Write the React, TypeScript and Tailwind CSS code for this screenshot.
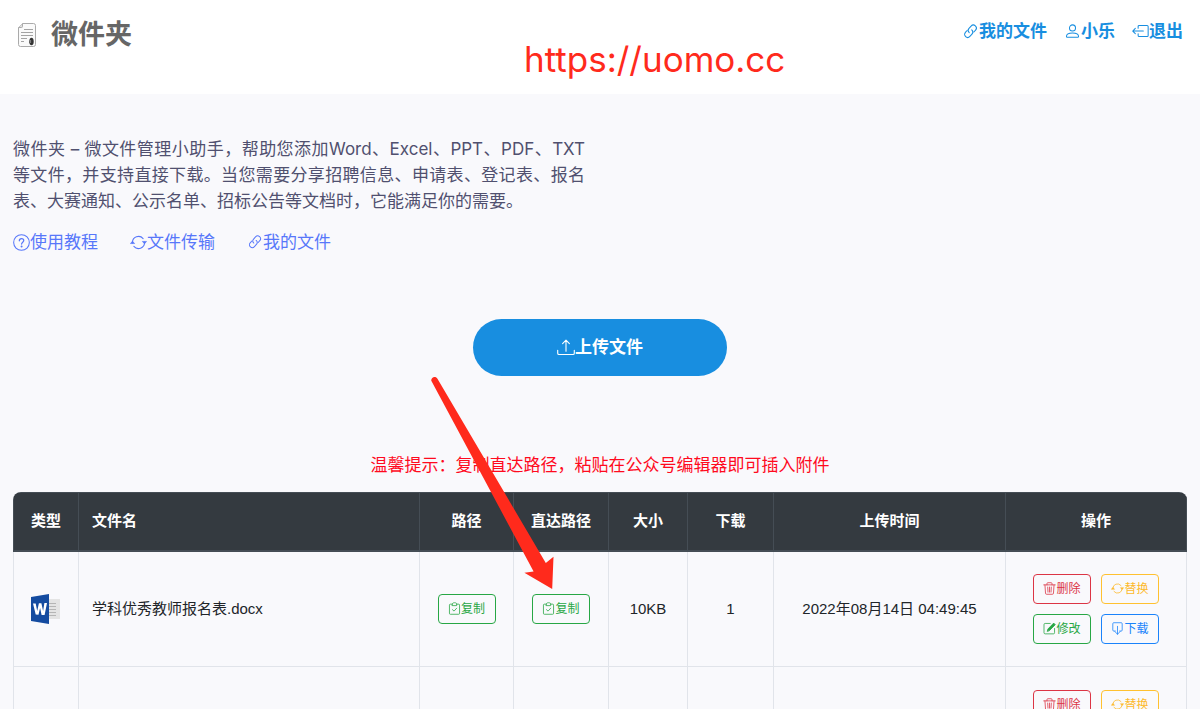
import React from "react";

type IconProps = { className?: string };

function Icon({ className = "", children, size = "size-[17px]" }: IconProps & { children: React.ReactNode; size?: string }) {
  return (
    <svg viewBox="0 0 18 18" className={`${size} shrink-0 ${className}`} fill="none" stroke="currentColor" strokeWidth="1.1" strokeLinecap="round" strokeLinejoin="round" aria-hidden="true">
      {children}
    </svg>
  );
}

const LinkIcon = ({ size }: { size?: string }) => (
  <Icon size={size}>
    <g transform="rotate(-48 9 9)">
      <path d="M7.400 5.600H4.700a3.200 3.200 0 0 0 0 6.400h3.300a3.200 3.200 0 0 0 3.200-3.200" />
      <path d="M11 12h2.700a3.200 3.200 0 0 0 0-6.400h-3.300A3.200 3.200 0 0 0 7.200 8.800" />
    </g>
  </Icon>
);
const UserIcon = () => (
  <Icon>
    <circle cx="9" cy="5.200" r="3.200" />
    <path d="M2.600 14.200c0-2.200 2.600-3.600 6.400-3.600s6.400 1.400 6.400 3.600c0 .6-.3.900-.9.900h-11c-.6 0-.9-.3-.9-.9z" />
  </Icon>
);
const ExitIcon = () => (
  <Icon>
    <path d="M6.500 5.500V3.700c0-.7.4-1.100 1.100-1.100H16c.7 0 1.100.4 1.100 1.100v9.600c0 .7-.4 1.100-1.100 1.100H7.600c-.7 0-1.100-.4-1.100-1.100V11.500M12 8.500H.8M3.500 5.700.8 8.500l2.700 2.800" />
  </Icon>
);
const HelpIcon = () => (
  <Icon>
    <circle cx="9" cy="9" r="8.300" />
    <path d="M6.700 7.200c0-1.500 1-2.400 2.400-2.400 1.300 0 2.300.9 2.300 2.100 0 1.700-2.300 1.900-2.300 3.800" strokeWidth="1.300" />
    <circle cx="9.100" cy="13.200" r=".5" fill="currentColor" />
  </Icon>
);
const SwapIcon = ({ size }: { size?: string }) => (
  <Icon size={size}>
    <path d="M2.600 9.500V9A6.400 6.400 0 0 1 13.900 4.900M15.400 8.500V9A6.400 6.400 0 0 1 4.100 13.100" />
    <path d="M.8 9.800 2.600 7.600 4.600 9.800zM13.400 8.200 15.400 10.400 17.200 8.200z" fill="currentColor" strokeWidth=".8" />
  </Icon>
);
const UploadIcon = () => (
  <Icon size="size-[18px]">
    <path d="M.7 11.200v3c0 .9.400 1.300 1.300 1.300h14c.9 0 1.300-.4 1.300-1.300v-3M9 12.200V1.400M5.600 4.600 9 1.200l3.400 3.400" />
  </Icon>
);
const ClipIcon = () => (
  <Icon size="size-[13px]">
    <path d="M6 3H3.300C2.400 3 2 3.400 2 4.300v11.400c0 .9.400 1.300 1.300 1.300h11.400c.9 0 1.300-.4 1.300-1.300V4.300c0-.9-.4-1.300-1.300-1.300H12" />
    <path d="M6 2.500C6 1.600 7.300 1 9 1s3 .6 3 1.500V5H6zM6.200 10.600l2.200 2 3.600-4" />
  </Icon>
);
const TrashIcon = () => (
  <Icon size="size-[13px]">
    <path d="M1 4h16M5.500 4V2.200c0-.8.400-1.200 1.200-1.200h4.600c.8 0 1.200.4 1.200 1.200V4M2.700 4l.8 11.600c.1 1 .5 1.400 1.500 1.400h8c1 0 1.400-.4 1.500-1.400L15.300 4M6.500 7l.4 7M9 7v7M11.500 7l-.4 7" />
  </Icon>
);
const EditIcon = () => (
  <Icon size="size-[13px]">
    <path d="M10 2H3c-1.100 0-1.600.5-1.600 1.600v11.200c0 1.100.5 1.600 1.600 1.600h11.400c1.100 0 1.600-.5 1.600-1.600V9" />
    <path d="M6 12.600 6.800 9.700 14.800 1.500 17 3.700 9 11.800z" fill="currentColor" />
  </Icon>
);
const DownloadIcon = () => (
  <Icon size="size-[13px]">
    <path d="M6 12.500H3.800c-.9 0-1.300-.4-1.300-1.300V2.300C2.500 1.400 2.900 1 3.800 1h10.400c.9 0 1.300.4 1.300 1.300v8.900c0 .9-.4 1.300-1.300 1.300H12M9 6v11M5.400 13.200 9 17l3.600-3.800" />
  </Icon>
);

function Logo() {
  return (
    <svg viewBox="0 0 20 26" className="h-[26px] w-5" aria-hidden="true">
      <path d="M5.500 1.500H16.500a2 2 0 0 1 2 2V22.500a2 2 0 0 1-2 2H3.500a2 2 0 0 1-2-2V5.500z" fill="#fafafa" stroke="#aaa" />
      <path d="M5.500 1.500v3a1 1 0 0 1-1 1h-3" fill="#ddd" stroke="#aaa" />
      <path d="M7 7.500h9M4 10.500h12M4 13.500h12M4 16.500h6M4 19.500h3" stroke="#999" strokeWidth=".9" />
      <path d="m12 20.500 3 2.800V17z" fill="#aaa" />
      <ellipse cx="14.500" cy="19.500" rx="2.200" ry="3.800" fill="#333" />
      <path d="M13.600 18v3" stroke="#aaa" strokeWidth=".7" />
    </svg>
  );
}

function WordIcon() {
  return (
    <svg viewBox="0 0 30 30" className="mx-auto size-[30px]" role="img" aria-label="Word">
      <rect x="16" y="5" width="13" height="20" fill="#e4e4e4" />
      <path d="M18 9.500h7M18 12.500h7M18 15.500h7M18 18.500h7M18 21.500h7" stroke="#b5b5b5" strokeWidth="1.200" />
      <path d="M0 3 18 0v30L0 27z" fill="#144ba0" />
      <path d="M2 9.500h2.700l1.500 7.600 1.700-7.800h2.500l1.700 7.700 1.300-8h2.600L13.600 21h-3L9.100 14 7.500 20.700l-2.800-.2z" fill="#fff" />
    </svg>
  );
}

const tones = {
  green: "border-[#28a745] text-[#28a745]",
  red: "border-[#dc3545] text-[#dc3545]",
  amber: "border-[#ffc130] text-[#fdb92c]",
  blue: "border-[#1a83fb] text-[#1a83fb]",
};

function SmallButton({ tone, icon, children }: { tone: keyof typeof tones; icon: React.ReactNode; children: string }) {
  return (
    <button type="button" className={`inline-flex h-[30px] w-[58px] items-center justify-center rounded border align-middle text-[12px] leading-none ${tones[tone]}`}>
      {icon}
      {children}
    </button>
  );
}

const files = [
  { name: "学科优秀教师报名表.docx", size: "10KB", downloads: 1, time: "2022年08月14日 04:49:45" },
  { name: "学科优秀教师报名表.docx", size: "10KB", downloads: 1, time: "2022年08月14日 04:49:45" },
];

const columns = [
  { label: "类型", width: "w-[65px]" },
  { label: "文件名", width: "" },
  { label: "路径", width: "w-[94px]" },
  { label: "直达路径", width: "w-[95px]" },
  { label: "大小", width: "w-[79px]" },
  { label: "下载", width: "w-[86px]" },
  { label: "上传时间", width: "w-[232px]" },
  { label: "操作", width: "w-[181px]" },
];

export default function App() {
  return (
    <div className="relative min-h-screen bg-[#f9f9fc] font-[Inter,'Noto_Sans_CJK_SC',sans-serif] text-[17px] text-[#212529]">
      <header className="flex h-[94px] items-start justify-between bg-white px-[17px]">
        <h1 className="flex items-center gap-[14px] pt-[15px] text-[27px] leading-[40px] font-bold text-[#666]">
          <Logo />
          微件夹
        </h1>
        <nav className="flex gap-[17px] pt-[18px] leading-[26px] font-bold text-[#188ee0]">
          <a href="#files" className="flex items-center"><LinkIcon />我的文件</a>
          <a href="#user" className="flex items-center"><UserIcon />小乐</a>
          <a href="#logout" className="flex items-center"><ExitIcon />退出</a>
        </nav>
      </header>

      <main className="px-[13px] pt-[42px]">
        <p className="max-w-[572px] text-justify leading-[26px] text-[#50506f]">
          微件夹 – 微文件管理小助手，帮助您添加Word、Excel、PPT、PDF、TXT等文件，并支持直接下载。当您需要分享招聘信息、申请表、登记表、报名表、大赛通知、公示名单、招标公告等文档时，它能满足你的需要。
        </p>
        <div className="mt-[15px] flex gap-8 leading-[26px] text-[#5777fa]">
          <a href="#help" className="flex items-center"><HelpIcon />使用教程</a>
          <a href="#transfer" className="flex items-center"><SwapIcon />文件传输</a>
          <a href="#files" className="flex items-center"><LinkIcon size="size-[16px]" />我的文件</a>
        </div>

        <div className="mt-16 flex justify-center">
          <button type="button" className="flex h-[57px] w-[254px] items-center justify-center rounded-full bg-[#188ee0] font-bold text-white">
            <UploadIcon />
            上传文件
          </button>
        </div>

        <p className="mt-[76px] text-center leading-[26px] text-[#ff0a1e]">温馨提示：复制直达路径，粘贴在公众号编辑器即可插入附件</p>

        <div id="files" className="mt-[14px] overflow-hidden rounded-t-lg">
          <table className="w-full table-fixed border-collapse text-center font-['Liberation_Sans','Noto_Sans_CJK_SC',sans-serif] text-[15px] leading-[22px]">
            <thead className="bg-[#343a40] text-white">
              <tr className="h-[58px]">
                {columns.map((c) => (
                  <th key={c.label} scope="col" className={`border border-b-2 border-[#454d55] font-bold ${c.width} ${c.label === "文件名" ? "pl-[13px] text-left" : ""}`}>
                    {c.label}
                  </th>
                ))}
              </tr>
            </thead>
            <tbody>
              {files.map((f, i) => (
                <tr key={i} className="h-[116px] [&>td]:border [&>td]:border-[#e1e4ea]">
                  <td><WordIcon /></td>
                  <td className="pl-[13px] text-left">{f.name}</td>
                  <td><SmallButton tone="green" icon={<ClipIcon />}>复制</SmallButton></td>
                  <td><SmallButton tone="green" icon={<ClipIcon />}>复制</SmallButton></td>
                  <td>{f.size}</td>
                  <td>{f.downloads}</td>
                  <td>{f.time}</td>
                  <td>
                    <div className="grid grid-cols-[58px_58px] justify-center gap-[10px]">
                      <SmallButton tone="red" icon={<TrashIcon />}>删除</SmallButton>
                      <SmallButton tone="amber" icon={<SwapIcon size="size-[13px]" />}>替换</SmallButton>
                      <SmallButton tone="green" icon={<EditIcon />}>修改</SmallButton>
                      <SmallButton tone="blue" icon={<DownloadIcon />}>下载</SmallButton>
                    </div>
                  </td>
                </tr>
              ))}
            </tbody>
          </table>
        </div>
      </main>

      <div className="absolute top-[37px] left-[524px] text-[35px] leading-[44px] text-[#ff2a1c]">https://uomo.cc</div>
      <svg viewBox="0 0 130 214" className="pointer-events-none absolute top-[376px] left-[430px] h-[214px] w-[130px]" aria-hidden="true">
        <path d="M1.300 4.800C.8 1.200 5.600-.6 7.600 3L115.800 187 123.500 180.800 122.200 213 94.400 196.800 103.600 195.400Z" fill="#ff2a1c" />
      </svg>
    </div>
  );
}
